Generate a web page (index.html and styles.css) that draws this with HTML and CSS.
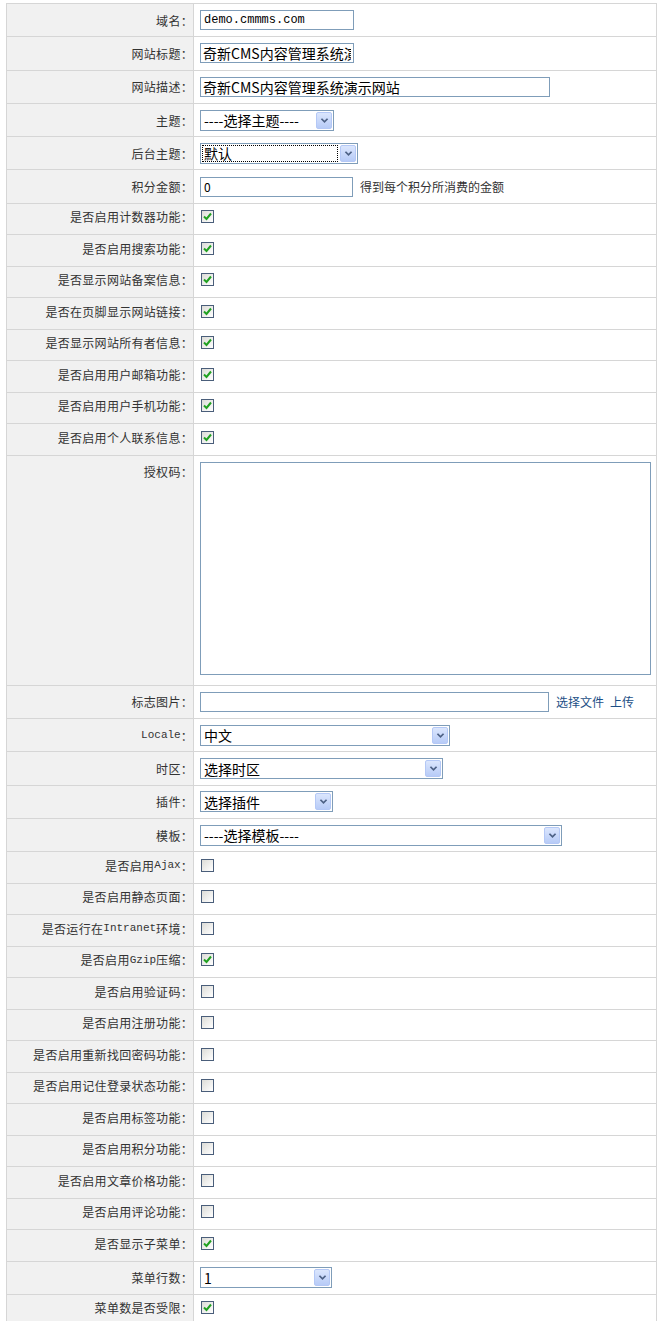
FILE: index.html
```html
<!DOCTYPE html>
<html lang="zh-CN">
<head>
    <meta charset="UTF-8">
    <title>系统设置</title>
    <link rel="stylesheet" href="styles.css">
</head>
<body>
    <div class="form">
        <div class="row">
            <div class="label">域名：</div>
            <div class="field"><input class="text mono w154" type="text" value="demo.cmmms.com"></div>
        </div>
        <div class="row">
            <div class="label">网站标题：</div>
            <div class="field"><input class="text big w154" type="text" value="奇新CMS内容管理系统演示网站"></div>
        </div>
        <div class="row">
            <div class="label">网站描述：</div>
            <div class="field"><input class="text big w350" type="text" value="奇新CMS内容管理系统演示网站"></div>
        </div>
        <div class="row">
            <div class="label">主题：</div>
            <div class="field">
                <div class="select w134"><span class="value">----选择主题----</span><span class="arrow"><svg viewBox="0 0 10 8" width="9" height="7"><path d="M1.5 2 L5 5.5 L8.5 2" fill="none" stroke="#4d6185" stroke-width="2"/></svg></span></div>
            </div>
        </div>
        <div class="row">
            <div class="label">后台主题：</div>
            <div class="field">
                <div class="select w158"><span class="value focused">默认</span><span class="arrow"><svg viewBox="0 0 10 8" width="9" height="7"><path d="M1.5 2 L5 5.5 L8.5 2" fill="none" stroke="#4d6185" stroke-width="2"/></svg></span></div>
            </div>
        </div>
        <div class="row">
            <div class="label">积分金额：</div>
            <div class="field">
                <input class="text small w153" type="text" value="0">
                <span class="hint">得到每个积分所消费的金额</span>
            </div>
        </div>

        <div class="row check">
            <div class="label">是否启用计数器功能：</div>
            <div class="field"><span class="checkbox"><svg viewBox="0 0 11 11" width="11" height="11"><path d="M2 5.5 L4.5 8 L9 2.5" fill="none" stroke="#21a121" stroke-width="2"/></svg></span></div>
        </div>
        <div class="row check">
            <div class="label">是否启用搜索功能：</div>
            <div class="field"><span class="checkbox"><svg viewBox="0 0 11 11" width="11" height="11"><path d="M2 5.5 L4.5 8 L9 2.5" fill="none" stroke="#21a121" stroke-width="2"/></svg></span></div>
        </div>
        <div class="row check">
            <div class="label">是否显示网站备案信息：</div>
            <div class="field"><span class="checkbox"><svg viewBox="0 0 11 11" width="11" height="11"><path d="M2 5.5 L4.5 8 L9 2.5" fill="none" stroke="#21a121" stroke-width="2"/></svg></span></div>
        </div>
        <div class="row check">
            <div class="label">是否在页脚显示网站链接：</div>
            <div class="field"><span class="checkbox"><svg viewBox="0 0 11 11" width="11" height="11"><path d="M2 5.5 L4.5 8 L9 2.5" fill="none" stroke="#21a121" stroke-width="2"/></svg></span></div>
        </div>
        <div class="row check">
            <div class="label">是否显示网站所有者信息：</div>
            <div class="field"><span class="checkbox"><svg viewBox="0 0 11 11" width="11" height="11"><path d="M2 5.5 L4.5 8 L9 2.5" fill="none" stroke="#21a121" stroke-width="2"/></svg></span></div>
        </div>
        <div class="row check">
            <div class="label">是否启用用户邮箱功能：</div>
            <div class="field"><span class="checkbox"><svg viewBox="0 0 11 11" width="11" height="11"><path d="M2 5.5 L4.5 8 L9 2.5" fill="none" stroke="#21a121" stroke-width="2"/></svg></span></div>
        </div>
        <div class="row check">
            <div class="label">是否启用用户手机功能：</div>
            <div class="field"><span class="checkbox"><svg viewBox="0 0 11 11" width="11" height="11"><path d="M2 5.5 L4.5 8 L9 2.5" fill="none" stroke="#21a121" stroke-width="2"/></svg></span></div>
        </div>
        <div class="row check">
            <div class="label">是否启用个人联系信息：</div>
            <div class="field"><span class="checkbox"><svg viewBox="0 0 11 11" width="11" height="11"><path d="M2 5.5 L4.5 8 L9 2.5" fill="none" stroke="#21a121" stroke-width="2"/></svg></span></div>
        </div>

        <div class="row area">
            <div class="label">授权码：</div>
            <div class="field"><textarea class="license"></textarea></div>
        </div>

        <div class="row">
            <div class="label">标志图片：</div>
            <div class="field">
                <input class="text w349" type="text" value="">
                <a class="link" href="#">选择文件</a>
                <a class="link" href="#">上传</a>
            </div>
        </div>
        <div class="row">
            <div class="label"><span class="latin">Locale</span>：</div>
            <div class="field">
                <div class="select w250"><span class="value">中文</span><span class="arrow"><svg viewBox="0 0 10 8" width="9" height="7"><path d="M1.5 2 L5 5.5 L8.5 2" fill="none" stroke="#4d6185" stroke-width="2"/></svg></span></div>
            </div>
        </div>
        <div class="row">
            <div class="label">时区：</div>
            <div class="field">
                <div class="select w243"><span class="value">选择时区</span><span class="arrow"><svg viewBox="0 0 10 8" width="9" height="7"><path d="M1.5 2 L5 5.5 L8.5 2" fill="none" stroke="#4d6185" stroke-width="2"/></svg></span></div>
            </div>
        </div>
        <div class="row">
            <div class="label">插件：</div>
            <div class="field">
                <div class="select w133"><span class="value">选择插件</span><span class="arrow"><svg viewBox="0 0 10 8" width="9" height="7"><path d="M1.5 2 L5 5.5 L8.5 2" fill="none" stroke="#4d6185" stroke-width="2"/></svg></span></div>
            </div>
        </div>
        <div class="row">
            <div class="label">模板：</div>
            <div class="field">
                <div class="select w362"><span class="value">----选择模板----</span><span class="arrow"><svg viewBox="0 0 10 8" width="9" height="7"><path d="M1.5 2 L5 5.5 L8.5 2" fill="none" stroke="#4d6185" stroke-width="2"/></svg></span></div>
            </div>
        </div>

        <div class="row check">
            <div class="label">是否启用<span class="latin">Ajax</span>：</div>
            <div class="field"><span class="checkbox"></span></div>
        </div>
        <div class="row check">
            <div class="label">是否启用静态页面：</div>
            <div class="field"><span class="checkbox"></span></div>
        </div>
        <div class="row check">
            <div class="label">是否运行在<span class="latin">Intranet</span>环境：</div>
            <div class="field"><span class="checkbox"></span></div>
        </div>
        <div class="row check">
            <div class="label">是否启用<span class="latin">Gzip</span>压缩：</div>
            <div class="field"><span class="checkbox"><svg viewBox="0 0 11 11" width="11" height="11"><path d="M2 5.5 L4.5 8 L9 2.5" fill="none" stroke="#21a121" stroke-width="2"/></svg></span></div>
        </div>
        <div class="row check">
            <div class="label">是否启用验证码：</div>
            <div class="field"><span class="checkbox"></span></div>
        </div>
        <div class="row check">
            <div class="label">是否启用注册功能：</div>
            <div class="field"><span class="checkbox"></span></div>
        </div>
        <div class="row check">
            <div class="label">是否启用重新找回密码功能：</div>
            <div class="field"><span class="checkbox"></span></div>
        </div>
        <div class="row check">
            <div class="label">是否启用记住登录状态功能：</div>
            <div class="field"><span class="checkbox"></span></div>
        </div>
        <div class="row check">
            <div class="label">是否启用标签功能：</div>
            <div class="field"><span class="checkbox"></span></div>
        </div>
        <div class="row check">
            <div class="label">是否启用积分功能：</div>
            <div class="field"><span class="checkbox"></span></div>
        </div>
        <div class="row check">
            <div class="label">是否启用文章价格功能：</div>
            <div class="field"><span class="checkbox"></span></div>
        </div>
        <div class="row check">
            <div class="label">是否启用评论功能：</div>
            <div class="field"><span class="checkbox"></span></div>
        </div>
        <div class="row check">
            <div class="label">是否显示子菜单：</div>
            <div class="field"><span class="checkbox"><svg viewBox="0 0 11 11" width="11" height="11"><path d="M2 5.5 L4.5 8 L9 2.5" fill="none" stroke="#21a121" stroke-width="2"/></svg></span></div>
        </div>
        <div class="row">
            <div class="label">菜单行数：</div>
            <div class="field">
                <div class="select w132"><span class="value">1</span><span class="arrow"><svg viewBox="0 0 10 8" width="9" height="7"><path d="M1.5 2 L5 5.5 L8.5 2" fill="none" stroke="#4d6185" stroke-width="2"/></svg></span></div>
            </div>
        </div>
        <div class="row check">
            <div class="label">菜单数是否受限：</div>
            <div class="field"><span class="checkbox"><svg viewBox="0 0 11 11" width="11" height="11"><path d="M2 5.5 L4.5 8 L9 2.5" fill="none" stroke="#21a121" stroke-width="2"/></svg></span></div>
        </div>
    </div>
</body>
</html>
```

FILE: styles.css
```css
body {
    margin: 0;
    background-color: #fff;
    font-family: 'Noto Sans CJK SC', 'Liberation Sans', sans-serif;
    font-size: 12px;
    color: #333;
}
.form {
    margin: 3px 0 0 6px;
    width: 649px;
    border-top: 1px solid #d6d6d6;
    border-left: 1px solid #d6d6d6;
    border-right: 1px solid #d6d6d6;
}
.row {
    display: flex;
    height: 33.3px;
    box-sizing: border-box;
    border-bottom: 1px solid #d6d6d6;
}
.row.check {
    height: 31.5px;
    padding-bottom: 5px;
}
.row.area {
    height: 230px;
}
.label {
    width: 187px;
    flex-shrink: 0;
    box-sizing: border-box;
    display: flex;
    align-items: center;
    justify-content: flex-end;
    padding-right: 0;
    background-color: #f1f1f1;
    border-right: 1px solid #d6d6d6;
    white-space: nowrap;
    letter-spacing: 0.3px;
}
.row.check .label {
    margin-bottom: -5px;
    padding-bottom: 5px;
}
.row.area .label {
    align-items: flex-start;
    padding-top: 7px;
}
.latin {
    font-family: 'Liberation Mono', monospace;
    font-size: 11px;
    letter-spacing: 0;
}
.field {
    flex: 1;
    display: flex;
    align-items: center;
    padding-left: 6px;
    gap: 7px;
}
.row.area .field {
    align-items: flex-start;
    padding-top: 6px;
}

/* text boxes */
.text {
    box-sizing: border-box;
    height: 20px;
    margin: 0;
    padding: 0 3px;
    border: 1px solid #7f9db9;
    background: #fff;
    color: #000;
    font-family: 'Noto Sans CJK SC', sans-serif;
    font-size: 12px;
    outline: none;
}
.text.mono {
    font-family: 'Liberation Mono', monospace;
    font-size: 12px;
}
.text.big {
    font-size: 14px;
    padding: 0 2px;
}
.text.small {
    font-size: 12px;
}
.w153 { width: 153px; }
.w154 { width: 154px; }
.w349 { width: 349px; }
.w350 { width: 350px; }
.hint {
    color: #333;
}
.link {
    color: #1d4f86;
    text-decoration: none;
}
.link + .link {
    margin-left: -1px;
}
.license {
    box-sizing: border-box;
    width: 451px;
    height: 213px;
    margin: 0;
    border: 1px solid #7f9db9;
    resize: none;
    outline: none;
}

/* drop-down lists */
.select {
    box-sizing: border-box;
    height: 21px;
    display: flex;
    align-items: center;
    border: 1px solid #7f9db9;
    background: #fff;
    color: #000;
    font-size: 14px;
    padding: 1px;
}
.select .value {
    flex: 1;
    height: 100%;
    display: flex;
    align-items: center;
    padding-left: 2px;
    box-sizing: border-box;
    white-space: nowrap;
    overflow: hidden;
}
.select .value.focused {
    border: 1px dotted #000;
    margin-right: 2px;
    padding-left: 1px;
}
.select .arrow {
    width: 16px;
    height: 100%;
    display: flex;
    align-items: center;
    justify-content: center;
    box-sizing: border-box;
    border: 1px solid #b4c8f6;
    border-radius: 2px;
    background: linear-gradient(#dbe6fd, #b7cbf7);
}
.w132 { width: 132px; }
.w133 { width: 133px; }
.w134 { width: 134px; }
.w158 { width: 158px; }
.w243 { width: 243px; }
.w250 { width: 250px; }
.w362 { width: 362px; }

/* check boxes */
.checkbox {
    box-sizing: border-box;
    width: 13px;
    height: 13px;
    margin-left: 1px;
    display: flex;
    align-items: center;
    justify-content: center;
    border: 1px solid #4a5e7a;
    background: linear-gradient(135deg, #dcdcd7, #fff);
}
```
